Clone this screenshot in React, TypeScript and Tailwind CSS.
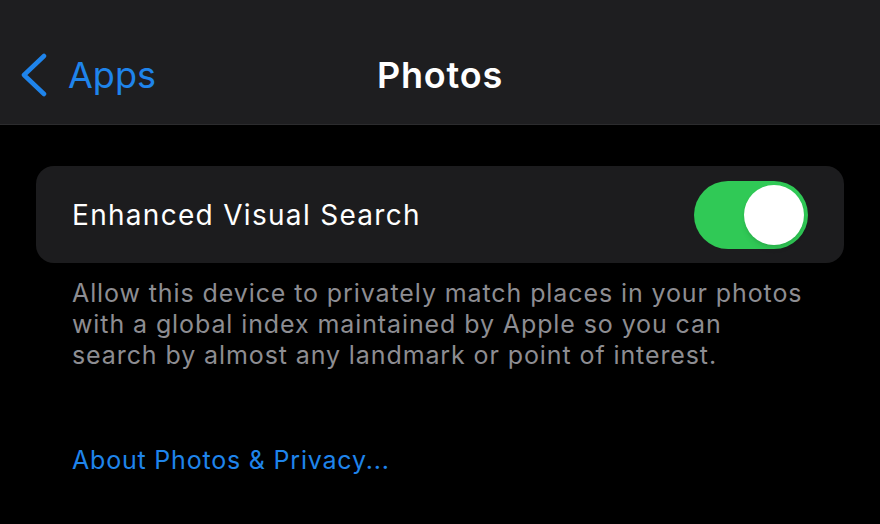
export default function App() {
  return (
    <div
      className="w-[880px] h-[524px] bg-black overflow-hidden"
      style={{ fontFamily: 'Inter, "Noto Sans", sans-serif' }}
    >
      <header className="relative h-[125px] bg-[#1e1e20] border-b border-[#2c2c2e] flex items-center pt-[26px]">
        <div className="flex items-center pl-[20px] text-[#1f84eb]">
          <svg width="28" height="44" viewBox="0 0 28 44" fill="none" stroke="currentColor" strokeWidth="4.5" strokeLinecap="round" strokeLinejoin="round">
            <path d="M24 3L4 22l20 19" />
          </svg>
          <span className="ml-[20px] text-[36px] leading-none tracking-[0px]">Apps</span>
        </div>
        <div className="absolute left-0 right-0 top-0 h-full flex items-center justify-center pt-[26px] pointer-events-none">
          <span className="text-white text-[36px] font-semibold leading-none tracking-[0.8px]">Photos</span>
        </div>
      </header>

      <div className="px-9 pt-[41px]">
        <div className="h-[97px] rounded-[18px] bg-[#1c1c1e] flex items-center justify-between pl-9 pr-9">
          <span className="text-white text-[28px] tracking-[1.3px]">Enhanced Visual Search</span>
          <div className="w-[114px] h-[68px] rounded-full bg-[#30c956] flex items-center justify-end pr-[4px]">
            <div className="w-[60px] h-[60px] rounded-full bg-white shadow-md" />
          </div>
        </div>

        <p className="mt-[15px] px-9 text-[#8d8d92] text-[25px] leading-[31px] tracking-[0.9px]">
          Allow this device to privately match places in your photos
          <br />
          with a global index maintained by Apple so you can
          <br />
          search by almost any landmark or point of interest.
        </p>

        <div className="mt-[74px] px-9 text-[#1f84eb] text-[25px] leading-[31px] tracking-[0.8px]">
          About Photos &amp; Privacy...
        </div>
      </div>
    </div>
  )
}
